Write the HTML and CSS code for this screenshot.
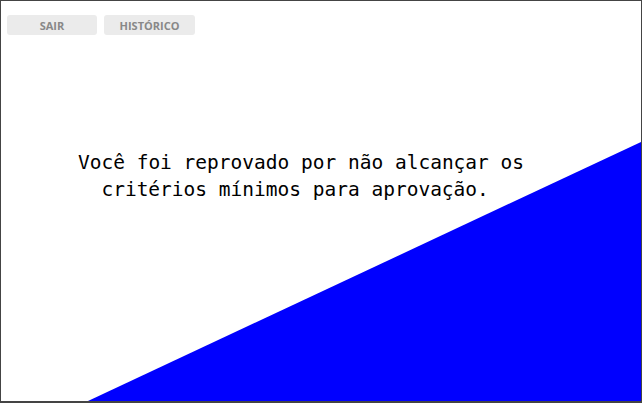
FILE: index.html
```html
<!DOCTYPE html>
<html lang="pt">
<head>
<meta charset="utf-8">
<title>Resultado</title>
<link rel="stylesheet" href="styles.css">
</head>
<body>
<div class="frame">
  <div class="toolbar">
    <button class="btn">SAIR</button>
    <button class="btn">HISTÓRICO</button>
  </div>
  <p class="message">Você foi reprovado por não alcançar os<br>critérios mínimos para aprovação.&nbsp;</p>
</div>
</body>
</html>
```

FILE: styles.css
```css
html, body {
  margin: 0;
  padding: 0;
  background: #ffffff;
}

.frame {
  position: relative;
  box-sizing: border-box;
  width: 642px;
  height: 403px;
  border: 1px solid #444444;
  border-bottom-width: 2px;
  overflow: hidden;
  display: flex;
  flex-direction: column;
  background: #ffffff;
}

.frame::before {
  content: "";
  position: absolute;
  inset: 0;
  background: #0000ff;
  clip-path: polygon(87px 100%, 100% 141px, 100% 100%);
  z-index: 0;
}

.toolbar {
  position: relative;
  z-index: 1;
  display: flex;
  gap: 7px;
  padding: 14px 6px 0;
}

.btn {
  width: 90px;
  height: 20px;
  padding: 2px 0 0;
  border: none;
  border-radius: 3px;
  background: #ebebeb;
  color: #888888;
  font-family: "Open Sans", sans-serif;
  font-weight: 700;
  font-size: 11px;
  line-height: 18px;
}

.btn + .btn {
  width: 91px;
}

.message {
  position: relative;
  z-index: 1;
  margin: 114px 40px 0 0;
  text-align: center;
  font-family: "DejaVu Sans Mono", monospace;
  font-size: 19.5px;
  line-height: 27px;
  color: #000000;
}
```
